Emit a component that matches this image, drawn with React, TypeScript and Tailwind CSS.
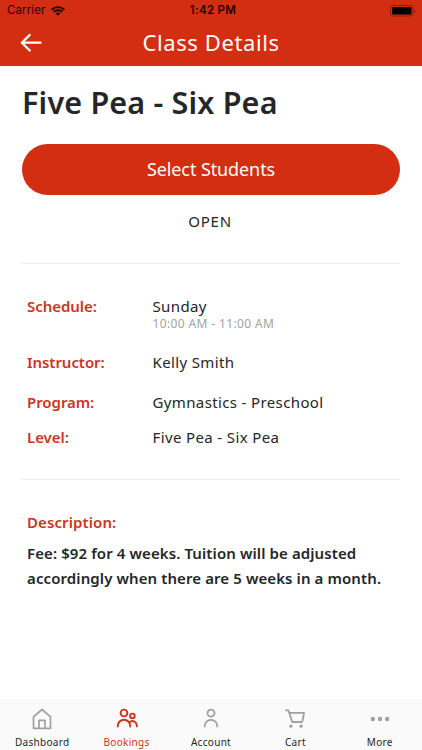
import type { ReactNode } from "react";

type Row = { label: string; value: string; note?: string; className: string };
type Tab = { label: string; icon: ReactNode; active?: boolean };

const rows: Row[] = [
  { label: "Schedule:", value: "Sunday", note: "10:00 AM - 11:00 AM", className: "h-14" },
  { label: "Instructor:", value: "Kelly Smith", className: "h-10" },
  { label: "Program:", value: "Gymnastics - Preschool", className: "h-[35px]" },
  { label: "Level:", value: "Five Pea - Six Pea", className: "h-5" }
];

const tabs: Tab[] = [
  { label: "Dashboard", icon: <HomeIcon /> },
  { label: "Bookings", icon: <PeopleIcon />, active: true },
  { label: "Account", icon: <PersonIcon /> },
  { label: "Cart", icon: <CartIcon /> },
  { label: "More", icon: <MoreIcon /> }
];

export default function App() {
  return (
    <div className="flex h-[750px] w-[422px] flex-col overflow-hidden bg-white font-['Noto_Sans',sans-serif] text-[#242627]">
      <header className="h-[65.5px] shrink-0 bg-[#d42e12]">
        <StatusBar />
        <div className="grid h-[43px] grid-cols-[62px_1fr_62px] items-center text-white">
          <button aria-label="Back" className="pl-5"><BackIcon /></button>
          <h1 className="pb-[3px] text-center text-[22px] leading-none tracking-[0.6px] whitespace-nowrap">Class Details</h1>
        </div>
      </header>

      <main className="flex-1 px-[22px]">
        <h2 className="mt-[18px] text-[30.5px] leading-9 font-semibold tracking-[0.18px] whitespace-nowrap">Five Pea - Six Pea</h2>
        <button className="mt-6 flex h-[51px] w-full items-center justify-center rounded-full bg-[#d42e12] text-lg tracking-[-0.1px] text-white">Select Students</button>
        <p className="mt-4 text-center text-[15px] leading-5 tracking-[0.8px] -ml-0.5">OPEN</p>

        <section className="mt-8 border-y border-[#ededed] px-[5px] pt-8 pb-8">
          {rows.map((row) => (
            <div key={row.label} className={`grid grid-cols-[125.5px_1fr] text-[15px] leading-5 ${row.className}`}>
              <span className="font-semibold tracking-[-0.05px] text-[#cb351d]">{row.label}</span>
              <div className="tracking-[0.37px]">
                <p>{row.value}</p>
                {row.note ? <p className="text-xs leading-[15px] text-[#a2a2a2]">{row.note}</p> : null}
              </div>
            </div>
          ))}
        </section>

        <section className="px-[5px] pt-8 text-[15px] font-semibold">
          <h3 className="leading-5 tracking-[0.1px] text-[#cb351d]">Description:</h3>
          <p className="mt-[9px] leading-[25px] tracking-[0.1px] whitespace-nowrap">
            Fee: $92 for 4 weeks. Tuition will be adjusted<br />
            accordingly when there are 5 weeks in a month.
          </p>
        </section>
      </main>

      <nav className="grid h-[51px] shrink-0 grid-cols-5 bg-[#fafafa]">
        {tabs.map((tab) => (
          <button key={tab.label} className={`flex flex-col items-center pt-[9px] ${tab.active ? "text-[#cb351d]" : "text-[#a0a0a0]"}`}>
            {tab.icon}
            <span className={`mt-[6px] text-[10px] leading-3 tracking-[0.3px] ${tab.active ? "" : "text-[#242627]"}`}>{tab.label}</span>
          </button>
        ))}
      </nav>
    </div>
  );
}

function StatusBar() {
  return (
    <div className="grid h-[22px] grid-cols-3 items-center font-['Inter',sans-serif] text-[11.5px] leading-none text-[#1b0502]">
      <div className="flex items-center gap-[6px] pl-[7px]">
        <span className="tracking-[0.1px]">Carrier</span>
        <svg width="14" height="10" viewBox="0 0 14 10" fill="none" stroke="currentColor" strokeWidth="1.9">
          <path d="M.7 3.7a9 9 0 0 1 12.6 0M2.8 6a6 6 0 0 1 8.4 0" />
          <path d="M7 9.8 4.7 7.5a3.3 3.3 0 0 1 4.6 0Z" fill="currentColor" stroke="none" />
        </svg>
      </div>
      <span className="pl-1 text-center font-semibold tracking-[0.3px]">1:42 PM</span>
      <svg className="mr-[5px] justify-self-end" width="27" height="12" viewBox="0 0 27 12">
        <rect x=".5" y=".5" width="22.5" height="10.5" rx="2.5" fill="none" stroke="#8b1d0a" />
        <rect x="2" y="2" width="19.5" height="7.5" rx="1.2" fill="#000" />
        <path d="M24.3 4v4c1.6-.5 1.6-3.5 0-4Z" fill="#8b1d0a" />
      </svg>
    </div>
  );
}

function BackIcon() {
  return (
    <svg width="22" height="19" viewBox="0 0 22 19" fill="none" stroke="currentColor" strokeWidth="2.2" strokeLinecap="round" strokeLinejoin="round">
      <path d="M20.5 8.700H1.800M9.800.9l-8 7.800 8 7.800" />
    </svg>
  );
}

function HomeIcon() {
  return (
    <svg width="22" height="22" viewBox="0 0 22 22" fill="none" stroke="currentColor" strokeWidth="1.7" strokeLinejoin="round">
      <path d="M2.500 8.800 11 1.500l8.500 7.300V20.300h-17Z" />
      <path d="M8 20.300v-8h6v8" />
    </svg>
  );
}

function PeopleIcon() {
  return (
    <svg width="22" height="22" viewBox="0 0 22 22" fill="none" stroke="currentColor" strokeWidth="1.9" strokeLinecap="round">
      <circle cx="8" cy="5" r="3.4" />
      <circle cx="16.400" cy="7.900" r="2.300" />
      <path d="M1.800 18.500v-.6a6.200 6.200 0 0 1 12.400 0v.6M14.400 13.600a4.400 4.400 0 0 1 6.400 4v.8" />
    </svg>
  );
}

function PersonIcon() {
  return (
    <svg width="22" height="22" viewBox="0 0 22 22" fill="none" stroke="currentColor" strokeWidth="1.8">
      <circle cx="11" cy="5.200" r="3.500" />
      <path d="M4.700 19.300v-1.200a6.300 6.300 0 0 1 12.600 0v1.200" />
    </svg>
  );
}

function CartIcon() {
  return (
    <svg width="22" height="22" viewBox="0 0 22 22" fill="none" stroke="currentColor" strokeWidth="1.8" strokeLinejoin="round">
      <path d="M1.200 2.300h3.200l3.800 11.700h10M5.300 4.900h14.800L18.200 14" />
      <circle cx="6.900" cy="18.200" r="1.600" fill="currentColor" stroke="none" />
      <circle cx="17.100" cy="18.200" r="1.600" fill="currentColor" stroke="none" />
    </svg>
  );
}

function MoreIcon() {
  return (
    <svg width="22" height="22" viewBox="0 0 22 22" fill="currentColor">
      <circle cx="3.800" cy="11" r="2.200" />
      <circle cx="11" cy="11" r="2.200" />
      <circle cx="18.200" cy="11" r="2.200" />
    </svg>
  );
}
